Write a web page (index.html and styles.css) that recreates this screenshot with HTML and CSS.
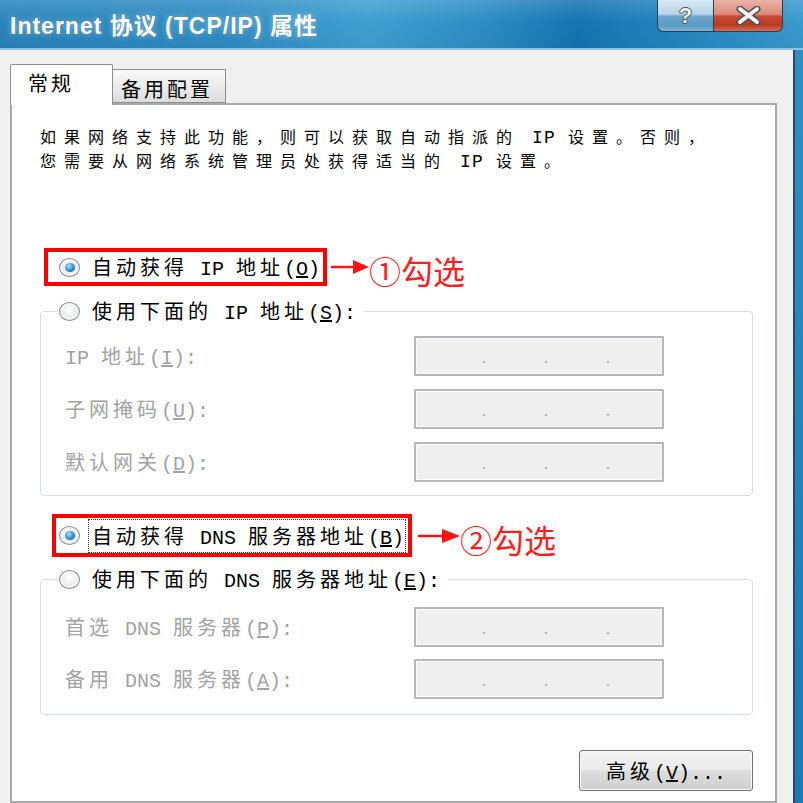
FILE: index.html
```html
<!DOCTYPE html>
<html lang="zh-CN">
<head>
<meta charset="UTF-8" />
<title>Internet 协议 (TCP/IP) 属性</title>
<link rel="stylesheet" href="styles.css">
</head>
<body>
<div class="window">
	<div class="titlebar">
		<div class="title">Internet 协议 (TCP/IP) 属性</div>
		<div class="caption">
			<span class="cap help">?</span>
			<span class="cap close">
				<svg width="25" height="19" viewBox="0 0 25 19">
					<path d="M4 3 L21 16 M21 3 L4 16" stroke="#4d5258" stroke-width="7" stroke-linecap="round" fill="none"/>
					<path d="M4 3 L21 16 M21 3 L4 16" stroke="#f4f4f4" stroke-width="4" stroke-linecap="round" fill="none"/>
				</svg>
			</span>
		</div>
	</div>

	<div class="client">
		<div class="tabs">
			<div class="tab on">常规</div>
			<div class="tab off">备用配置</div>
		</div>

		<div class="panel">
			<p class="intro">如果网络支持此功能，则可以获取自动指派的<span class="lat"> IP </span>设置。否则，<br>您需要从网络系统管理员处获得适当的<span class="lat"> IP </span>设置。</p>

			<div class="mark-row first">
				<div class="mark">
					<span class="radio on"></span>
					<span class="opt">自动获得<span class="lat"> IP </span>地址<span class="lat">(<u>O</u>)</span></span>
				</div>
				<svg class="arrow" width="38" height="16" viewBox="0 0 38 16">
					<line x1="0" y1="8" x2="24" y2="8" stroke="#ff1414" stroke-width="2.5"/>
					<polygon points="22,1 38,8 22,15" fill="#ff1414"/>
				</svg>
				<span class="note">①勾选</span>
			</div>

			<fieldset class="group">
				<legend><span class="radio"></span><span class="opt">使用下面的<span class="lat"> IP </span>地址<span class="lat">(<u>S</u>):</span></span></legend>
				<div class="fields">
					<span class="field-label"><span class="lat">IP </span>地址<span class="lat">(<u>I</u>):</span></span>
					<span class="ipbox"><i></i><i></i><i></i></span>
					<span class="field-label">子网掩码<span class="lat">(<u>U</u>):</span></span>
					<span class="ipbox"><i></i><i></i><i></i></span>
					<span class="field-label">默认网关<span class="lat">(<u>D</u>):</span></span>
					<span class="ipbox"><i></i><i></i><i></i></span>
				</div>
			</fieldset>

			<div class="mark-row second">
				<div class="mark">
					<span class="radio on"></span>
					<span class="opt focus">自动获得<span class="lat"> DNS </span>服务器地址<span class="lat">(<u>B</u>)</span></span>
				</div>
				<svg class="arrow" width="42" height="16" viewBox="0 0 42 16">
					<line x1="0" y1="8" x2="26" y2="8" stroke="#ff1414" stroke-width="2.5"/>
					<polygon points="24,1 42,8 24,15" fill="#ff1414"/>
				</svg>
				<span class="note">②勾选</span>
			</div>

			<fieldset class="group dns">
				<legend><span class="radio"></span><span class="opt">使用下面的<span class="lat"> DNS </span>服务器地址<span class="lat">(<u>E</u>):</span></span></legend>
				<div class="fields">
					<span class="field-label">首选<span class="lat"> DNS </span>服务器<span class="lat">(<u>P</u>):</span></span>
					<span class="ipbox"><i></i><i></i><i></i></span>
					<span class="field-label">备用<span class="lat"> DNS </span>服务器<span class="lat">(<u>A</u>):</span></span>
					<span class="ipbox"><i></i><i></i><i></i></span>
				</div>
			</fieldset>

			<div class="actions">
				<button class="btn">高级<span class="lat">(<u>V</u>)...</span></button>
			</div>
		</div>
	</div>
</div>
</body>
</html>
```

FILE: styles.css
```css
* {
	box-sizing: border-box;
}

body {
	margin: 0;
	background: #fff;
	font-family: "Noto Sans CJK SC", sans-serif;
}

.window {
	width: 803px;
	height: 803px;
	overflow: hidden;
	display: flex;
	flex-direction: column;
	background: linear-gradient(to bottom, #2f90c6, #1c7ab4);
}

/* caption */
.titlebar {
	height: 50px;
	flex: none;
	display: flex;
	justify-content: space-between;
	border-bottom: 2px solid #8cc4e2;
	background:
		linear-gradient(to bottom, rgba(255,255,255,0.14), rgba(255,255,255,0) 45%, rgba(0,0,0,0.04)),
		linear-gradient(to right, #2a84bc 0%, #2e8cc3 28%, #409fd0 46%, #2f8dc4 60%, #1574b1 72%, #2688c2 86%, #3a9ace 100%);
}

.title {
	padding: 11px 0 0 10px;
	line-height: 30px;
	font-family: "Liberation Sans", "Noto Sans CJK SC", sans-serif;
	font-size: 23px;
	font-weight: bold;
	letter-spacing: 1px;
	color: #fff;
	text-shadow: 0 0 6px rgba(255,255,255,0.45), 0 0 1px rgba(0,50,90,0.5);
}

.caption {
	display: flex;
	align-self: flex-start;
	margin-right: 20px;
}

.cap {
	height: 32px;
	display: flex;
	align-items: center;
	justify-content: center;
	border: 1px solid #2e3c48;
	border-top: 0;
}

.help {
	width: 56px;
	border-right: 0;
	border-radius: 0 0 0 6px;
	background: linear-gradient(to bottom, #d8e9f4 0%, #b6d4e8 46%, #6ea6cb 52%, #5a9ac4 80%, #7db4d6 100%);
	font-family: "Liberation Sans", sans-serif;
	font-size: 22px;
	font-weight: bold;
	color: #eef0f2;
	text-shadow: 1px 0 0 #4d5258, -1px 0 0 #4d5258, 0 1px 0 #4d5258, 0 -1px 0 #4d5258;
}

.close {
	width: 70px;
	border-radius: 0 0 6px 0;
	background: linear-gradient(to bottom, #eab3a6 0%, #dc8b79 46%, #c84b33 52%, #b93a22 80%, #d46a4d 100%);
}

/* client area */
.client {
	flex: 1;
	display: flex;
	flex-direction: column;
	margin-right: 8px;
	padding: 14px 16px 0 10px;
	background: #f0f0f0;
	border-right: 2px solid #2a4a62;
}

.tabs {
	display: flex;
	align-items: flex-end;
	height: 41px;
	margin-bottom: -2px;
	position: relative;
	z-index: 1;
}

.tab {
	border: 1px solid #8e8e8e;
	font-size: 20px;
	letter-spacing: 3px;
	color: #000;
}

.tab.on {
	width: 103px;
	height: 41px;
	padding: 5px 0 0 17px;
	line-height: 26px;
	border-bottom: 0;
	border-radius: 2px 2px 0 0;
	background: #fff;
}

.tab.off {
	width: 113px;
	height: 34px;
	margin-bottom: 2px;
	padding: 4px 0 0 8px;
	line-height: 30px;
	border-left: 0;
	background: linear-gradient(to bottom, #fafafa, #dcdcdc);
}

.panel {
	flex: 1;
	padding: 0 22px 0 28px;
	background: #fff;
	border: 2px solid #a9a9a9;
}

.lat {
	font-family: "Liberation Mono", monospace;
	font-size: 20px;
	line-height: 0;
	letter-spacing: 0;
}

.intro {
	margin: 20px 0 0;
	font-size: 16px;
	line-height: 23.5px;
	letter-spacing: 8px;
	color: #000;
}

.intro .lat {
	font-size: 18px;
	letter-spacing: 1.2px;
}

.opt {
	font-size: 20px;
	line-height: 24px;
	letter-spacing: 4px;
	color: #000;
	white-space: nowrap;
}

/* radio buttons */
.radio {
	flex: none;
	position: relative;
	width: 21px;
	height: 19px;
	margin-right: 12px;
	border: 1px solid #888b8e;
	border-radius: 50%;
	background: radial-gradient(circle at 50% 40%, #ffffff 0%, #ebebeb 55%, #c8c8c8 100%);
	box-shadow: inset 0 0 0 2px #f6f6f6;
}

.radio.on::after {
	content: "";
	position: absolute;
	left: 50%;
	top: 50%;
	width: 10px;
	height: 9px;
	margin: -4.5px 0 0 -5px;
	border-radius: 50%;
	background: radial-gradient(circle at 40% 35%, #a6e2ff 0%, #2b8bd5 55%, #0c4c8e 100%);
}

/* red annotations */
.mark-row {
	display: flex;
	align-items: center;
}

.mark-row.first {
	margin: 74px 0 0 4px;
}

.mark-row.second {
	margin: 18px 0 0 12px;
}

.mark {
	display: flex;
	align-items: center;
	border: 4px solid #ff0000;
}

.first .mark {
	height: 38px;
	padding: 0 3px 0 11px;
}

.second .mark {
	height: 43px;
	padding: 0 2px 0 3px;
}

.second .radio {
	margin-right: 8px;
}

.opt.focus {
	line-height: 32px;
	padding: 0 1px 0 3px;
	border: 1px dotted #333;
}

.first .arrow {
	margin-left: 4px;
}

.second .arrow {
	margin-left: 6px;
}

.note {
	margin-top: 6px;
	font-size: 32px;
	line-height: 36px;
	color: #ff1e1e;
}

/* group boxes */
.group {
	margin: 11px 0 0;
	padding: 0;
	min-width: 0;
	border: 1px solid #d4dee5;
	border-radius: 4px;
}

.group.dns {
	margin-top: 10px;
}

.group legend {
	display: flex;
	align-items: center;
	height: 24px;
	margin-left: 17px;
	padding: 0 8px 0 1px;
}

.fields {
	display: grid;
	grid-template-columns: 349px 250px;
	row-gap: 13px;
	align-items: center;
	padding: 13px 0 13px 24px;
}

.dns .fields {
	row-gap: 12px;
	padding: 16px 0 15px 24px;
}

.field-label {
	font-size: 20px;
	line-height: 24px;
	letter-spacing: 4px;
	color: #a2a2a2;
	white-space: nowrap;
}

.ipbox {
	height: 40px;
	display: flex;
	align-items: flex-end;
	gap: 60px;
	padding: 0 0 11px 67px;
	background: #efefef;
	border: 2px solid #b7b7bb;
	border-radius: 1px;
	box-shadow: inset 0 0 0 1px #fbfbfb;
}

.ipbox i {
	width: 2px;
	height: 2px;
	background: #b2b2b2;
}

/* bottom button */
.actions {
	display: flex;
	justify-content: flex-end;
	margin-top: 35px;
}

.btn {
	width: 174px;
	height: 41px;
	padding: 0;
	font-family: "Noto Sans CJK SC", sans-serif;
	font-size: 20px;
	letter-spacing: 4px;
	color: #000;
	border: 1px solid #707070;
	border-radius: 3px;
	background: linear-gradient(to bottom, #f3f3f3 0%, #ebebeb 48%, #dddddd 52%, #cfcfcf 100%);
	box-shadow: inset 0 0 0 1px #fbfbfb;
}
```
